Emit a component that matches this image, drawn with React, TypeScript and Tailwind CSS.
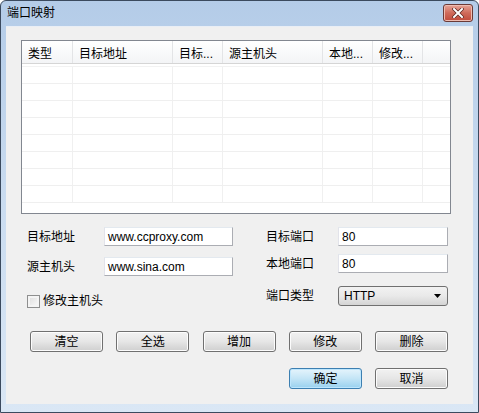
import React from "react"

const font = { fontFamily: '"Liberation Sans", "Noto Sans CJK SC", sans-serif' }

const columns = [
  { label: "类型", w: "w-[51px]" },
  { label: "目标地址", w: "w-[100px]" },
  { label: "目标...", w: "w-[50px]" },
  { label: "源主机头", w: "w-[100px]" },
  { label: "本地...", w: "w-[50px]" },
  { label: "修改...", w: "w-[50px]" },
]

const rows = [0, 1, 2, 3, 4, 5, 6, 7]

function Btn({ label, primary = false }: { label: string; primary?: boolean }) {
  return (
    <button
      type="button"
      className={`flex h-[21px] w-[73px] items-center justify-center rounded-[3px] border text-[12px] text-black ${
        primary
          ? "border-[#3c7fb1] bg-gradient-to-b from-[#e5f4fc] via-[#c4e5f6] to-[#98d1ef] shadow-[inset_0_0_0_1px_#bde6fd]"
          : "border-[#707070] bg-gradient-to-b from-[#f2f2f2] via-[#e6e6e6] to-[#cfcfcf] shadow-[inset_0_0_0_1px_#fcfcfc]"
      }`}
    >
      {label}
    </button>
  )
}

function Field({ value, w }: { value: string; w: string }) {
  return (
    <div
      className={`flex h-[19px] ${w} items-center border border-[#abadb3] border-t-[#e3e9ef] border-l-[#e2e3ea] bg-white pl-[3px] text-[12px] text-black`}
    >
      {value}
    </div>
  )
}

export default function App() {
  return (
    <div
      style={font}
      className="flex h-[413px] w-[479px] flex-col overflow-hidden rounded-t-[6px] border border-[#3b4a5e] bg-gradient-to-b from-[#b4cce8] via-[#cadcf0] to-[#dae7f5]"
    >
      {/* title bar */}
      <div className="flex h-[25px] shrink-0 items-start justify-between pl-[6px] pr-[5px] pt-[4px]">
        <span className="text-[12px] leading-[16px] text-black">端口映射</span>
        <div className="-mt-[1px] flex h-[18px] w-[30px] items-center justify-center rounded-[3px] border border-[#6b3a36] bg-gradient-to-b from-[#e6a497] via-[#cf6a5a] to-[#c04a3b] shadow-[inset_0_0_0_1px_#eebcb1]">
          <svg width="12" height="10" viewBox="0 0 12 10">
            <path d="M2 1 L10 9 M10 1 L2 9" stroke="#5b2620" strokeWidth="3.4" strokeLinecap="square" />
            <path d="M2 1 L10 9 M10 1 L2 9" stroke="#ffffff" strokeWidth="2" strokeLinecap="square" />
          </svg>
        </div>
      </div>

      {/* client area */}
      <div className="mx-[5px] mb-[8px] flex flex-1 flex-col border-t border-[#e9eef5] bg-[#f0f0f0] pl-[15px] pt-[13px]">
        {/* list view */}
        <div className="h-[174px] w-[430px] overflow-hidden border border-[#828790] bg-white">
          <div className="flex h-[23px] border-b border-[#d5d5d5] bg-gradient-to-b from-white to-[#f3f4f6]">
            {columns.map((c) => (
              <div
                key={c.label}
                className={`${c.w} flex shrink-0 items-center border-r border-[#e3e4e6] pl-[6px] pt-[4px] text-[12px] text-black`}
              >
                {c.label}
              </div>
            ))}
            <div className="flex-1" />
          </div>
          <div className="h-[3px] border-b border-[#f2f2f2]" />
          {rows.map((r) => (
            <div key={r} className="flex h-[17px] border-b border-[#efefef]">
              {columns.map((c) => (
                <div key={c.label} className={`${c.w} shrink-0 border-r border-[#f0f0f0]`} />
              ))}
              <div className="flex-1" />
            </div>
          ))}
        </div>

        {/* form */}
        <div className="mt-[13px] flex pl-[6px]">
          <div className="flex w-[239px] flex-col">
            <div className="flex h-[19px] items-center">
              <span className="w-[77px] text-[12px] text-black">目标地址</span>
              <Field value="www.ccproxy.com" w="w-[129px]" />
            </div>
            <div className="mt-[11px] flex h-[19px] items-center">
              <span className="w-[77px] text-[12px] text-black">源主机头</span>
              <Field value="www.sina.com" w="w-[129px]" />
            </div>
            <div className="mt-[16px] flex items-center gap-[3px]">
              <span className="h-[13px] w-[13px] border border-[#8e8f8f] bg-gradient-to-br from-[#dcdcdc] to-[#fbfbfb] shadow-[inset_0_0_0_2px_#f4f4f4]" />
              <span className="text-[12px] text-black">修改主机头</span>
            </div>
          </div>
          <div className="flex flex-col">
            <div className="flex h-[19px] items-center">
              <span className="w-[72px] text-[12px] text-black">目标端口</span>
              <Field value="80" w="w-[110px]" />
            </div>
            <div className="mt-[8px] flex h-[19px] items-center">
              <span className="w-[72px] text-[12px] text-black">本地端口</span>
              <Field value="80" w="w-[110px]" />
            </div>
            <div className="mt-[13px] flex h-[20px] items-center">
              <span className="w-[72px] text-[12px] text-black">端口类型</span>
              <div className="flex h-[20px] w-[110px] items-center justify-between rounded-[3px] border border-[#707070] bg-gradient-to-b from-[#f2f2f2] via-[#e9e9e9] to-[#d4d4d4] pl-[5px] pr-[6px] text-[12px] text-black">
                <span>HTTP</span>
                <svg width="7" height="4" viewBox="0 0 7 4">
                  <path d="M0 0 H7 L3.5 4 Z" fill="#000" />
                </svg>
              </div>
            </div>
          </div>
        </div>

        {/* buttons */}
        <div className="ml-[9px] mt-[21px] flex w-[418px] justify-between">
          <Btn label="清空" />
          <Btn label="全选" />
          <Btn label="增加" />
          <Btn label="修改" />
          <Btn label="删除" />
        </div>
        <div className="ml-[9px] mt-[16px] flex w-[418px] justify-end gap-[13px]">
          <Btn label="确定" primary />
          <Btn label="取消" />
        </div>
      </div>
    </div>
  )
}
